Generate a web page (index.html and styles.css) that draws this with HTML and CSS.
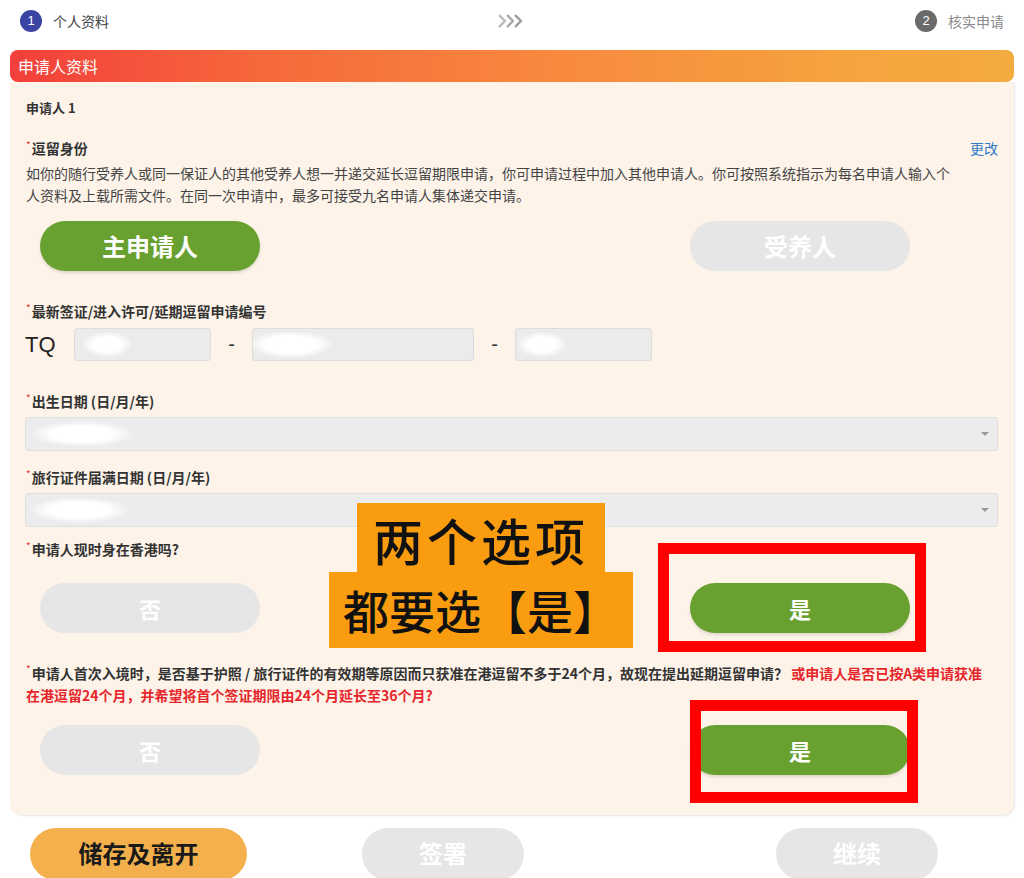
FILE: index.html
```html
<!DOCTYPE html>
<html lang="zh-CN">
<head>
<meta charset="utf-8">
<title>申请人资料</title>
<link rel="stylesheet" href="styles.css">
</head>
<body>
<div class="steps">
  <div class="step"><span class="num num-active">1</span><span class="step-label step-label-active">个人资料</span></div>
  <svg class="chev" width="30" height="16" viewBox="0 0 30 16" aria-hidden="true">
    <polyline points="2,2 8,8 2,14" fill="none" stroke="#b9b9b9" stroke-width="2.4" stroke-linejoin="round"/>
    <polyline points="10,2 16,8 10,14" fill="none" stroke="#aaaaaa" stroke-width="2.4" stroke-linejoin="round"/>
    <polyline points="18,2 24,8 18,14" fill="none" stroke="#9a9a9a" stroke-width="2.4" stroke-linejoin="round"/>
  </svg>
  <div class="step"><span class="num">2</span><span class="step-label">核实申请</span></div>
</div>

<div class="panel">
  <div class="panel-head">申请人资料</div>
  <div class="panel-body">
    <div class="applicant">申请人 1</div>

    <div class="field-head">
      <span class="label"><i class="req">*</i>逗留身份</span>
      <a class="link">更改</a>
    </div>
    <p class="desc">如你的随行受养人或同一保证人的其他受养人想一并递交延长逗留期限申请，你可申请过程中加入其他申请人。你可按照系统指示为每名申请人输入个<br>人资料及上载所需文件。在同一次申请中，最多可接受九名申请人集体递交申请。</p>

    <div class="choice-row row-status">
      <div class="pill pill-green">主申请人</div>
      <div class="pill pill-gray pill-right">受养人</div>
    </div>

    <div class="label label-visa"><i class="req">*</i>最新签证/进入许可/延期逗留申请编号</div>
    <div class="tq-row">
      <span class="tq">TQ</span>
      <span class="input input-a"></span>
      <span class="dash">-</span>
      <span class="input input-b"></span>
      <span class="dash">-</span>
      <span class="input input-c"></span>
    </div>

    <div class="label label-dob"><i class="req">*</i>出生日期 (日/月/年)</div>
    <div class="select select-dob"><span class="caret"></span></div>

    <div class="label label-exp"><i class="req">*</i>旅行证件届满日期 (日/月/年)</div>
    <div class="select select-exp"><span class="caret"></span></div>

    <div class="label label-hk"><i class="req">*</i>申请人现时身在香港吗?</div>
    <div class="choice-row row-hk">
      <div class="pill pill-gray">否</div>
      <div class="pill pill-green pill-right">是</div>
      <div class="mark mark-one"></div>
    </div>

    <p class="question"><i class="req">*</i>申请人首次入境时，是否基于护照 / 旅行证件的有效期等原因而只获准在港逗留不多于24个月，故现在提出延期逗留申请？ <span class="warn">或申请人是否已按A类申请获准<br>在港逗留24个月，并希望将首个签证期限由24个月延长至36个月?</span></p>
    <div class="choice-row row-q2">
      <div class="pill pill-gray">否</div>
      <div class="pill pill-green pill-right">是</div>
      <div class="mark mark-two"></div>
    </div>

    <div class="callout">
      <span class="callout-line callout-one">两个选项</span>
      <span class="callout-line callout-two">都要选【是】</span>
    </div>
  </div>
</div>

<div class="actions">
  <div class="act act-save">储存及离开</div>
  <div class="act act-sign">签署</div>
  <div class="act act-next">继续</div>
</div>
</body>
</html>
```

FILE: styles.css
```css
* { box-sizing: border-box; }

html, body {
  margin: 0;
  padding: 0;
  background: #ffffff;
  font-family: "Noto Sans CJK SC", "Noto Sans", sans-serif;
  color: #333333;
  overflow: hidden;
}

/* ---------- steps ---------- */
.steps {
  height: 42px;
  padding: 0 20px;
  display: flex;
  align-items: center;
  justify-content: space-between;
}
.step {
  display: flex;
  align-items: center;
  gap: 11px;
}
.num {
  width: 22px;
  height: 22px;
  border-radius: 50%;
  background: #6a6a6a;
  color: #ffffff;
  font-size: 13px;
  line-height: 22px;
  text-align: center;
  font-family: "Liberation Sans", sans-serif;
}
.num-active { background: #3a44a2; }
.step-label {
  font-size: 14px;
  color: #8a8a8a;
  line-height: 20px;
}
.step-label-active { color: #444444; }
.chev { display: block; }

/* ---------- panel ---------- */
.panel {
  margin: 8px 10px 0;
}
.panel-head {
  height: 32px;
  border-radius: 8px;
  background: linear-gradient(90deg, #f23f3b 0%, #f6683b 25%, #f88a3e 55%, #f5a53f 85%, #f3ab40 100%);
  color: #ffffff;
  font-size: 16px;
  line-height: 32px;
  padding-left: 8px;
  position: relative;
  z-index: 1;
}
.panel-body {
  position: relative;
  background: #fdf3e9;
  border-radius: 0 0 12px 12px;
  box-shadow: 1px 1px 2px rgba(0, 0, 0, 0.10);
  padding: 16px 16px 40px;
}

.applicant {
  font-size: 13px;
  font-weight: 700;
  line-height: 20px;
  color: #333333;
}

.field-head {
  margin-top: 20px;
  display: flex;
  justify-content: space-between;
  align-items: center;
}
.label {
  font-size: 14px;
  font-weight: 700;
  line-height: 20px;
  color: #333333;
}
.req {
  font-style: normal;
  color: #e3342f;
  font-size: 10px;
  font-weight: 400;
  vertical-align: top;
  line-height: 14px;
  margin-right: 1px;
}
.link {
  color: #2f7bc8;
  font-size: 14px;
  line-height: 20px;
  cursor: pointer;
}
.desc {
  margin: 4px 0 0;
  font-size: 14px;
  line-height: 22px;
  color: #444444;
}

/* ---------- pills ---------- */
.choice-row {
  position: relative;
  display: flex;
  align-items: center;
  padding-left: 14px;
  padding-right: 88px;
}
.row-status { margin-top: 15px; }
.row-hk { margin-top: 24px; }
.row-q2 { margin-top: 19px; }

.pill {
  width: 220px;
  height: 50px;
  border-radius: 25px;
  color: #ffffff;
  font-weight: 700;
  font-size: 24px;
  line-height: 50px;
  text-align: center;
}
.pill-green {
  background: #68a12f;
  box-shadow: 0 2px 3px rgba(0, 0, 0, 0.12);
}
.pill-gray {
  background: #e6e6e6;
}
.pill-right { margin-left: auto; }

.row-hk .pill, .row-q2 .pill { font-size: 22px; }

/* ---------- red annotation boxes ---------- */
.mark {
  position: absolute;
  border: 11px solid #ff0000;
}
.mark-one {
  left: 632px;
  top: -40px;
  width: 268px;
  height: 109px;
}
.mark-two {
  left: 664px;
  top: -25px;
  width: 228px;
  height: 103px;
}

/* ---------- TQ row ---------- */
.label-visa { margin-top: 30px; }
.tq-row {
  margin-top: 7px;
  display: flex;
  align-items: center;
  height: 33px;
}
.tq {
  width: 49px;
  font-size: 22px;
  font-family: "Liberation Sans", sans-serif;
  color: #222222;
  line-height: 33px;
  margin-left: -1px;
}
.dash {
  width: 41px;
  text-align: center;
  font-size: 20px;
  font-family: "Liberation Sans", sans-serif;
  color: #333333;
}
.input {
  height: 33px;
  border: 1px solid #dddddd;
  border-radius: 3px;
  background-color: #ebebeb;
}
.input-a {
  width: 137px;
  background-image: radial-gradient(ellipse 26px 13px at 32px 50%, #ffffff 55%, rgba(255, 255, 255, 0) 100%);
}
.input-b {
  width: 222px;
  background-image: radial-gradient(ellipse 44px 14px at 38px 50%, #ffffff 60%, rgba(255, 255, 255, 0) 100%);
}
.input-c {
  width: 137px;
  background-image: radial-gradient(ellipse 26px 13px at 26px 50%, #ffffff 55%, rgba(255, 255, 255, 0) 100%);
}

/* ---------- selects ---------- */
.label-dob { margin-top: 30px; }
.label-exp { margin-top: 16px; }
.label-hk { margin-top: 12px; }

.select {
  margin-top: 6px;
  margin-left: -1px;
  height: 34px;
  border: 1px solid #dedede;
  border-radius: 3px;
  background-color: #ececec;
  display: flex;
  align-items: center;
  justify-content: flex-end;
  padding-right: 8px;
}
.select-dob {
  background-image: radial-gradient(ellipse 52px 13px at 56px 50%, #ffffff 60%, rgba(255, 255, 255, 0) 100%);
}
.select-exp {
  background-image: radial-gradient(ellipse 50px 13px at 53px 50%, #ffffff 60%, rgba(255, 255, 255, 0) 100%);
}
.caret {
  width: 0;
  height: 0;
  border-left: 4px solid transparent;
  border-right: 4px solid transparent;
  border-top: 4px solid #9a9a9a;
}

/* ---------- question 2 ---------- */
.question {
  margin: 29px 0 0;
  font-size: 14px;
  font-weight: 700;
  line-height: 22px;
  color: #333333;
}
.warn { color: #e5262b; }

/* ---------- callout ---------- */
.callout {
  position: absolute;
  left: 319px;
  top: 421px;
  width: 304px;
  display: flex;
  flex-direction: column;
  align-items: center;
}
.callout-line {
  display: block;
  background: #f99c10;
  color: #111111;
  text-align: center;
  font-weight: 500;
}
.callout-one {
  width: 248px;
  height: 69px;
  font-size: 50px;
  line-height: 72px;
  letter-spacing: 4px;
}
.callout-two {
  width: 304px;
  height: 76px;
  font-size: 46px;
  line-height: 74px;
}

/* ---------- actions ---------- */
.actions {
  margin-top: 13px;
  display: flex;
  align-items: flex-start;
  padding-left: 30px;
}
.act {
  height: 52px;
  border-radius: 26px;
  font-size: 24px;
  font-weight: 700;
  line-height: 50px;
  text-align: center;
  color: #ffffff;
  background: #e6e6e6;
}
.act-save {
  width: 217px;
  background: #f4b04c;
  color: #1a1a1a;
}
.act-sign {
  width: 162px;
  margin-left: 115px;
}
.act-next {
  width: 162px;
  margin-left: 252px;
}
```
